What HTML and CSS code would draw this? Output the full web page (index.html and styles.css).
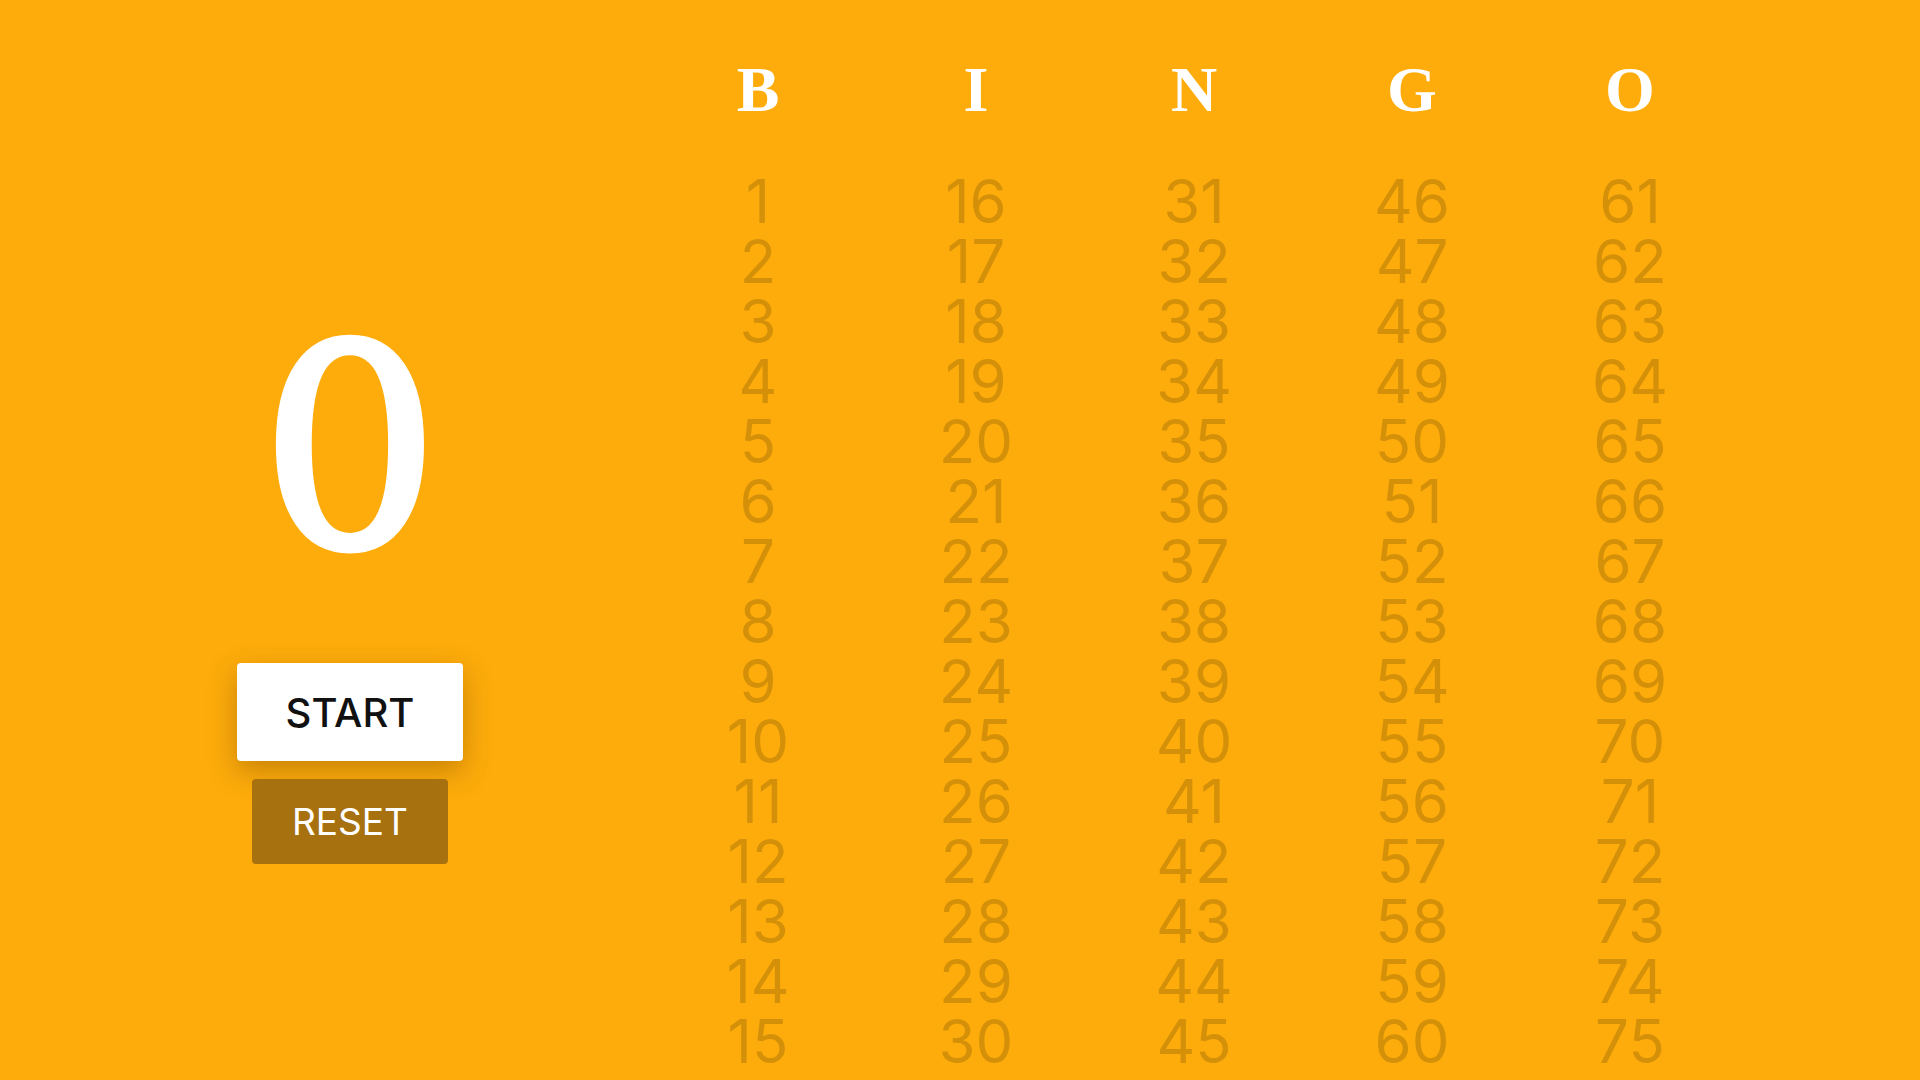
FILE: index.html
```html
<!DOCTYPE html>
<html lang="en">
<head>
<meta charset="utf-8">
<title>Bingo</title>
<link rel="stylesheet" href="styles.css">
</head>
<body>
<main class="app">
  <section class="caller">
    <div class="current">0</div>
    <button class="btn btn-start">START</button>
    <button class="btn btn-reset">RESET</button>
  </section>
  <section class="board">
    <div class="col">
      <div class="letter">B</div>
      <div class="num">1</div><div class="num">2</div><div class="num">3</div><div class="num">4</div><div class="num">5</div>
      <div class="num">6</div><div class="num">7</div><div class="num">8</div><div class="num">9</div><div class="num">10</div>
      <div class="num">11</div><div class="num">12</div><div class="num">13</div><div class="num">14</div><div class="num">15</div>
    </div>
    <div class="col">
      <div class="letter">I</div>
      <div class="num">16</div><div class="num">17</div><div class="num">18</div><div class="num">19</div><div class="num">20</div>
      <div class="num">21</div><div class="num">22</div><div class="num">23</div><div class="num">24</div><div class="num">25</div>
      <div class="num">26</div><div class="num">27</div><div class="num">28</div><div class="num">29</div><div class="num">30</div>
    </div>
    <div class="col">
      <div class="letter">N</div>
      <div class="num">31</div><div class="num">32</div><div class="num">33</div><div class="num">34</div><div class="num">35</div>
      <div class="num">36</div><div class="num">37</div><div class="num">38</div><div class="num">39</div><div class="num">40</div>
      <div class="num">41</div><div class="num">42</div><div class="num">43</div><div class="num">44</div><div class="num">45</div>
    </div>
    <div class="col">
      <div class="letter">G</div>
      <div class="num">46</div><div class="num">47</div><div class="num">48</div><div class="num">49</div><div class="num">50</div>
      <div class="num">51</div><div class="num">52</div><div class="num">53</div><div class="num">54</div><div class="num">55</div>
      <div class="num">56</div><div class="num">57</div><div class="num">58</div><div class="num">59</div><div class="num">60</div>
    </div>
    <div class="col">
      <div class="letter">O</div>
      <div class="num">61</div><div class="num">62</div><div class="num">63</div><div class="num">64</div><div class="num">65</div>
      <div class="num">66</div><div class="num">67</div><div class="num">68</div><div class="num">69</div><div class="num">70</div>
      <div class="num">71</div><div class="num">72</div><div class="num">73</div><div class="num">74</div><div class="num">75</div>
    </div>
  </section>
</main>
</body>
</html>
```

FILE: styles.css
```css
html, body {
  margin: 0;
  padding: 0;
  height: 100%;
}

body {
  background: #fdac0b;
  font-family: Inter, "Noto Sans", "Liberation Sans", sans-serif;
  overflow: hidden;
}

.app {
  display: flex;
  height: 1080px;
}

.caller {
  width: 598px;
  margin-left: 51px;
  display: flex;
  flex-direction: column;
  align-items: center;
  padding-top: 309px;
  box-sizing: border-box;
}

.current {
  font-family: "DejaVu Serif", "Liberation Serif", serif;
  font-weight: 400;
  font-size: 280px;
  line-height: 280px;
  height: 280px;
  color: #ffffff;
  -webkit-text-stroke: 7px #ffffff;
}

.btn {
  border: none;
  border-radius: 4px;
  font-family: Inter, "Noto Sans", "Liberation Sans", sans-serif;
  cursor: pointer;
  padding: 0;
}

.btn-start {
  margin-top: 74px;
  width: 226px;
  height: 98px;
  background: #ffffff;
  color: #111111;
  font-size: 40px;
  font-weight: 500;
  box-shadow: 0 10px 28px rgba(120, 70, 0, 0.4);
}

.btn-reset {
  margin-top: 18px;
  width: 196px;
  height: 85px;
  background: #a8710f;
  color: #ffffff;
  font-size: 37px;
  font-weight: 400;
}

.board {
  display: grid;
  grid-template-columns: repeat(5, 218px);
  align-content: start;
}

.col {
  display: flex;
  flex-direction: column;
  align-items: center;
}

.letter {
  font-family: "Liberation Serif", "Times New Roman", serif;
  font-weight: 700;
  font-size: 64px;
  line-height: 64px;
  color: #ffffff;
  margin-top: 58px;
  margin-bottom: 49px;
}

.num {
  font-size: 60px;
  line-height: 60px;
  font-weight: 400;
  color: rgba(0, 0, 0, 0.16);
}
```
